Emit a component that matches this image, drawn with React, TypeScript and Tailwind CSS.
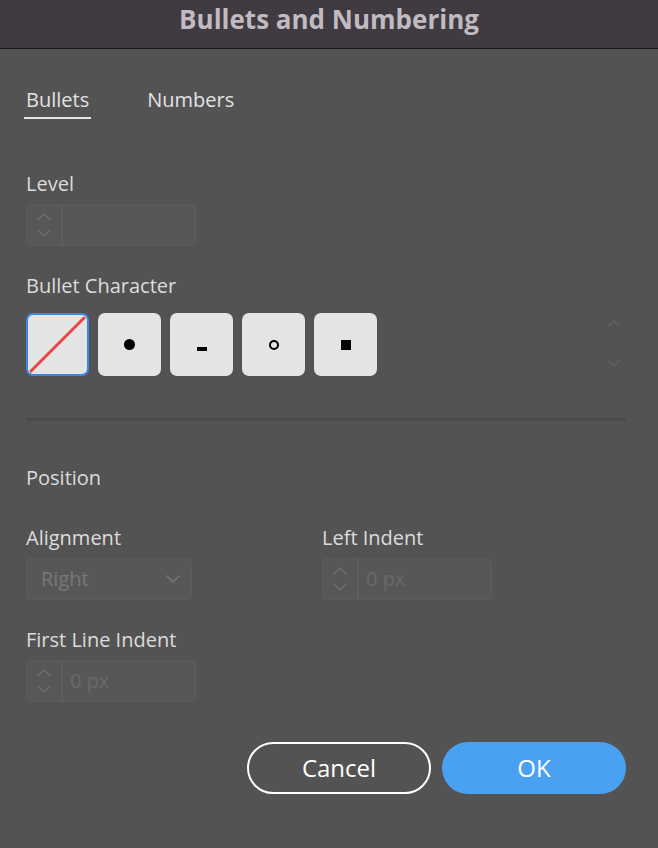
import React from "react";

const Chevrons = () => (
  <svg width="16" height="30" viewBox="0 0 16 30" fill="none" stroke="#6e6e6e" strokeWidth="1.5" strokeLinecap="round" strokeLinejoin="round">
    <path d="M2 10 L8 4 L14 10" />
    <path d="M2 20 L8 26 L14 20" />
  </svg>
);

const Spinner = ({ value }: { value?: string }) => (
  <div className="flex h-[42px] w-[170px] rounded-[5px] border border-[#5c5c5c] bg-[#575757]">
    <div className="flex w-[36px] items-center justify-center border-r-2 border-[#5e5e5e]">
      <Chevrons />
    </div>
    <div className="flex items-center pl-[7px] text-[20px] font-medium text-[#696969]">{value}</div>
  </div>
);

const Label = ({ children }: { children: React.ReactNode }) => (
  <div className="h-[24px] text-[20px] font-medium leading-[24px] text-[#dcdcdc]">{children}</div>
);

export default function App() {
  const font = { fontFamily: '"Open Sans", "Noto Sans", sans-serif' };
  return (
    <div className="h-[848px] w-[658px] overflow-hidden bg-[#535353]" style={font}>
      <div className="flex h-[49px] items-center justify-center border-b border-[#1a1a1a] bg-[#403b40] pb-[10px]">
        <span className="text-[26px] font-bold leading-[30px] text-[#c2bac2]">Bullets and Numbering</span>
      </div>
      <div className="relative flex flex-col pl-[26px] pr-[32px]">
        <div className="mt-[39px] flex items-start text-[20px] font-medium leading-[24px] text-[#e2e2e2]">
          <div className="-ml-[2px] border-b-2 border-[#e6e6e6] px-[2px] pb-[5px]">Bullets</div>
          <div className="ml-[56px]">Numbers</div>
        </div>

        <div className="mt-[53px]">
          <Label>Level</Label>
        </div>
        <div className="mt-[8px]">
          <Spinner />
        </div>

        <div className="mt-[28px]">
          <Label>Bullet Character</Label>
        </div>
        <div className="mt-[15px] flex gap-[9px]">
          <div className="relative h-[63px] w-[63px] overflow-hidden rounded-[7px] border-2 border-[#3a86e6] bg-[#e4e4e4]">
            <svg className="absolute inset-0" width="59" height="59" viewBox="0 0 59 59">
              <line x1="3" y1="56" x2="56" y2="3" stroke="#e84444" strokeWidth="3" strokeLinecap="round" />
            </svg>
          </div>
          <div className="flex h-[63px] w-[63px] items-center justify-center rounded-[7px] bg-[#e4e4e4]">
            <div className="h-[11px] w-[11px] rounded-full bg-black" />
          </div>
          <div className="flex h-[63px] w-[63px] items-center justify-center rounded-[7px] bg-[#e4e4e4]">
            <div className="mt-[8px] h-[4px] w-[10px] bg-black" />
          </div>
          <div className="flex h-[63px] w-[63px] items-center justify-center rounded-[7px] bg-[#e4e4e4]">
            <div className="h-[10px] w-[10px] rounded-full border-2 border-black" />
          </div>
          <div className="flex h-[63px] w-[63px] items-center justify-center rounded-[7px] bg-[#e4e4e4]">
            <div className="h-[10px] w-[10px] bg-black" />
          </div>
        </div>
        <svg className="absolute left-[606px] top-[268px]" width="16" height="54" viewBox="0 0 16 54" fill="none" stroke="#5e5e5e" strokeWidth="2" strokeLinecap="round">
          <path d="M3 9 L8 4 L13 9" />
          <path d="M3 44 L8 49 L13 44" />
        </svg>

        <div className="mt-[42px] h-[3px] w-[600px] bg-[#4b4b4b]" />

        <div className="mt-[45px]">
          <Label>Position</Label>
        </div>

        <div className="mt-[36px] flex">
          <div className="w-[296px]">
            <Label>Alignment</Label>
            <div className="mt-[8px] flex h-[42px] w-[166px] items-center justify-between rounded-[5px] border border-[#5c5c5c] bg-[#575757] pl-[14px] pr-[10px]">
              <span className="text-[20px] font-medium text-[#787878]">Right</span>
              <svg width="16" height="10" viewBox="0 0 16 10" fill="none" stroke="#787878" strokeWidth="1.5" strokeLinecap="round" strokeLinejoin="round">
                <path d="M2 2 L8 8 L14 2" />
              </svg>
            </div>
          </div>
          <div>
            <Label>Left Indent</Label>
            <div className="mt-[8px]">
              <Spinner value="0 px" />
            </div>
          </div>
        </div>

        <div className="mt-[28px]">
          <Label>First Line Indent</Label>
        </div>
        <div className="mt-[8px]">
          <Spinner value="0 px" />
        </div>

        <div className="mt-[40px] flex justify-end gap-[11px]">
          <button className="flex h-[52px] w-[184px] items-center justify-center rounded-full border-2 border-white text-[24px] font-medium text-white">
            Cancel
          </button>
          <button className="flex h-[52px] w-[184px] items-center justify-center rounded-full bg-[#4aa1f2] text-[24px] font-medium text-white">
            OK
          </button>
        </div>
      </div>
    </div>
  );
}
